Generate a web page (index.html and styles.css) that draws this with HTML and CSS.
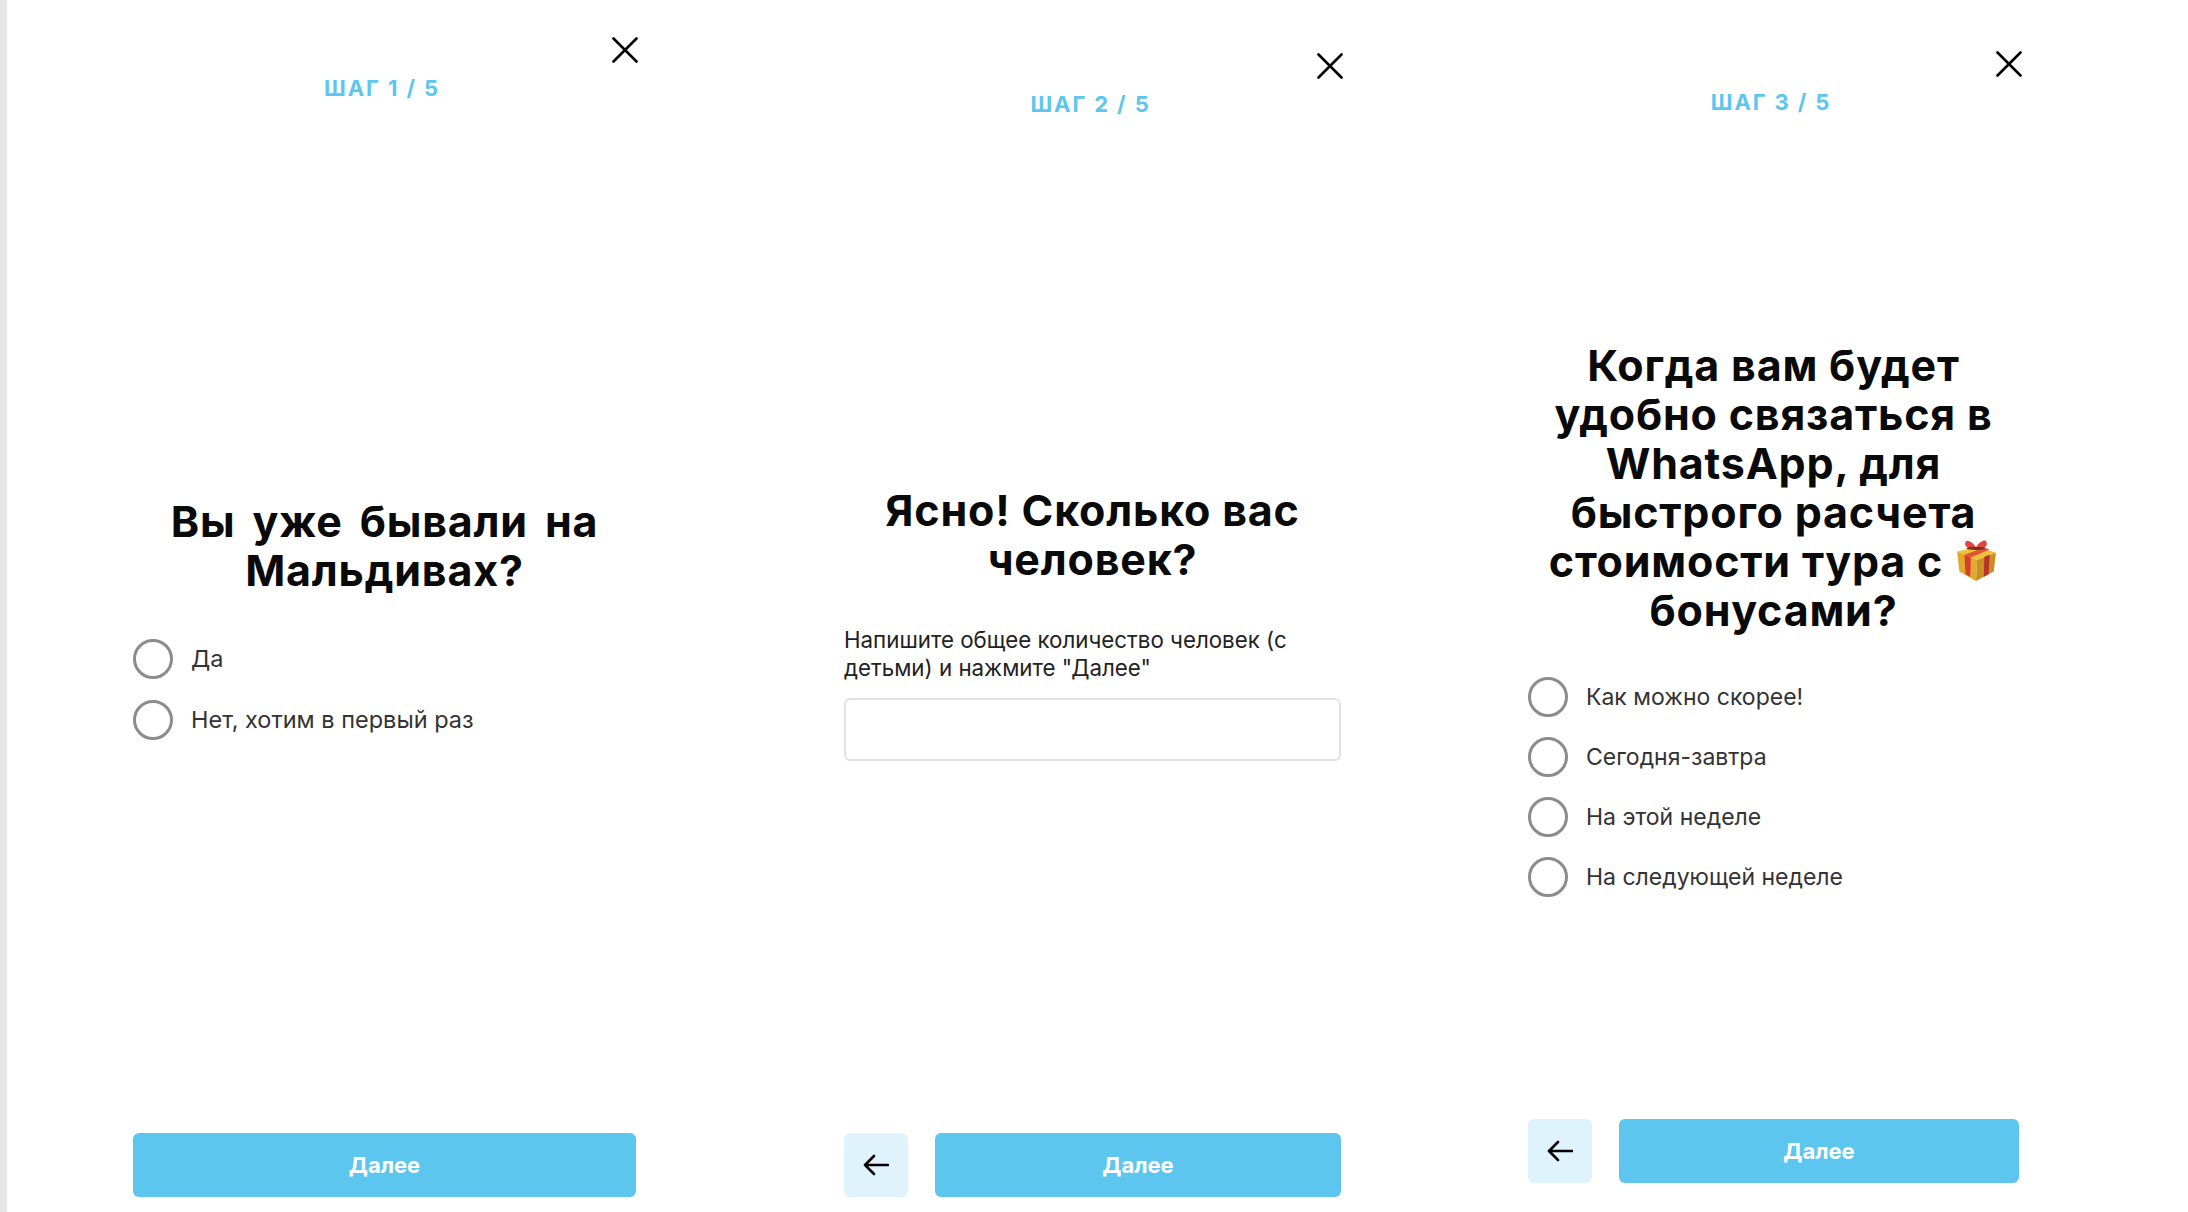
FILE: index.html
```html
<!DOCTYPE html>
<html lang="ru">
<head>
    <meta charset="UTF-8">
    <title>Квиз</title>
    <link rel="stylesheet" href="styles.css">
</head>
<body>

    <div class="strip"></div>

    <section class="panel panel-one">
        <div class="step">ШАГ 1 / 5</div>
        <svg class="close" viewBox="0 0 26 26"><path d="M1.5 1.5 24.5 24.5M24.5 1.5 1.5 24.5"/></svg>
        <div class="body">
            <h2>Вы уже бывали на<br>Мальдивах?</h2>
            <div class="options">
                <label class="option"><span class="radio"></span>Да</label>
                <label class="option"><span class="radio"></span>Нет, хотим в первый раз</label>
            </div>
        </div>
        <div class="footer">
            <button class="next">Далее</button>
        </div>
    </section>

    <section class="panel panel-two">
        <div class="step">ШАГ 2 / 5</div>
        <svg class="close" viewBox="0 0 26 26"><path d="M1.5 1.5 24.5 24.5M24.5 1.5 1.5 24.5"/></svg>
        <div class="body">
            <h2>Ясно! Сколько вас<br>человек?</h2>
            <p class="hint">Напишите общее количество человек (с<br>детьми) и нажмите "Далее"</p>
            <input class="field" type="text">
        </div>
        <div class="footer">
            <button class="back"><svg viewBox="0 0 26 22"><path d="M25 11H2M11 2 2 11l9 9"/></svg></button>
            <button class="next">Далее</button>
        </div>
    </section>

    <section class="panel panel-three">
        <div class="step">ШАГ 3 / 5</div>
        <svg class="close" viewBox="0 0 26 26"><path d="M1.5 1.5 24.5 24.5M24.5 1.5 1.5 24.5"/></svg>
        <div class="body">
            <h2>Когда вам будет<br>удобно связаться в<br>WhatsApp, для<br>быстрого расчета<br>стоимости тура с
                <svg class="gift" viewBox="0 0 42 40">
                    <path d="M3 12 23 7 40 13 22 20Z" fill="#f0c13c"/>
                    <path d="M3 12 22 20 21 40 5 31Z" fill="#e3a92c"/>
                    <path d="M22 20 40 13 38 31 21 40Z" fill="#c98f22"/>
                    <path d="M10 15 16 17.500 15.500 36 11 33.500Z" fill="#d63d30"/>
                    <path d="M29 17 34 15 33 33.500 28.500 36Z" fill="#b5332a"/>
                    <path d="M10 15 29 8 34 10 16 17.500Z" fill="#d63d30" opacity=".8"/>
                    <path d="M21 8C17 1 11 1 11 3 9 7 15 10 21 10 27 10 33 7 31 3 31 0 25 1 21 8Z" fill="#e0443c"/>
                    <ellipse cx="21" cy="9" rx="9" ry="1.500" fill="#7a2a20"/>
                </svg><br>бонусами?</h2>
            <div class="options">
                <label class="option"><span class="radio"></span>Как можно скорее!</label>
                <label class="option"><span class="radio"></span>Сегодня-завтра</label>
                <label class="option"><span class="radio"></span>На этой неделе</label>
                <label class="option"><span class="radio"></span>На следующей неделе</label>
            </div>
        </div>
        <div class="footer">
            <button class="back"><svg viewBox="0 0 26 22"><path d="M25 11H2M11 2 2 11l9 9"/></svg></button>
            <button class="next">Далее</button>
        </div>
    </section>

</body>
</html>
```

FILE: styles.css
```css
html, body {
    height: 100%;
}
body {
    margin: 0;
    height: 1212px;
    overflow: hidden;
    display: grid;
    grid-template-columns: 7px 733px 675px 773px;
    background: #fff;
    font-family: Inter, "Open Sans", sans-serif;
    color: #333;
}
.strip {
    background: #e6e6eb;
}
.panel {
    position: relative;
    display: flex;
    flex-direction: column;
    min-width: 0;
}
.panel-one {
    padding: 74px 104px 15px 126px;
}
.panel-two {
    padding: 90px 74px 15px 104px;
}
.panel-three {
    padding: 88px 169px 29px 113px;
}
.step {
    height: 28px;
    line-height: 28px;
    text-align: center;
    font-size: 22px;
    font-weight: 700;
    letter-spacing: 1.9px;
    color: #5cc6ef;
}
.panel-one .step {
    margin-left: -5px;
}
.panel-two .step {
    margin-left: -4px;
}
.panel-three .step {
    margin-left: -5px;
}
.close {
    position: absolute;
    width: 26px;
    height: 26px;
    fill: none;
    stroke: #000;
    stroke-width: 2.6;
    stroke-linecap: round;
}
.panel-one .close {
    top: 37px;
    right: 102px;
}
.panel-two .close {
    top: 53px;
    right: 72px;
}
.panel-three .close {
    top: 51px;
    right: 166px;
}
.body {
    flex: 1;
    display: flex;
    flex-direction: column;
    justify-content: center;
    min-height: 0;
}
.panel-one .body {
    padding-top: 1px;
}
.panel-two .body {
    padding-bottom: 4px;
}
.panel-three .body {
    padding-top: 2px;
}
h2 {
    margin: 0;
    text-align: center;
    font-size: 43px;
    line-height: 49px;
    font-weight: 700;
    letter-spacing: 0.8px;
    color: #0a0a0a;
}
.panel-one h2 {
    word-spacing: 6px;
}
.gift {
    width: 44px;
    height: 42px;
    vertical-align: -4px;
}
.options {
    display: flex;
    flex-direction: column;
    gap: 20px;
    margin-top: 42px;
    font-size: 23px;
}
.panel-one .options {
    gap: 21px;
    margin-top: 44px;
    font-size: 23.500px;
}
.option {
    display: flex;
    align-items: center;
    gap: 18px;
    height: 40px;
    color: #333;
}
.radio {
    flex: none;
    box-sizing: border-box;
    width: 40px;
    height: 40px;
    border: 3px solid #8c8c8c;
    border-radius: 50%;
}
.hint {
    margin: 42px 0 0;
    font-size: 22.300px;
    line-height: 28px;
    color: #222;
}
.field {
    display: block;
    box-sizing: border-box;
    width: 100%;
    height: 63px;
    margin-top: 16px;
    border: 2px solid #e2e2e2;
    border-radius: 6px;
    background: #fff;
}
.footer {
    display: flex;
    gap: 27px;
    height: 64px;
}
button {
    border: 0;
    border-radius: 6px;
    font-family: inherit;
    padding: 0;
}
.next {
    flex: 1;
    background: #5cc6ef;
    color: #fff;
    font-size: 22px;
    font-weight: 700;
}
.back {
    flex: none;
    width: 64px;
    background: #dff3fd;
    display: flex;
    align-items: center;
    justify-content: center;
}
.back svg {
    width: 26px;
    height: 22px;
    fill: none;
    stroke: #000;
    stroke-width: 2.6;
    stroke-linecap: round;
    stroke-linejoin: round;
}
```
